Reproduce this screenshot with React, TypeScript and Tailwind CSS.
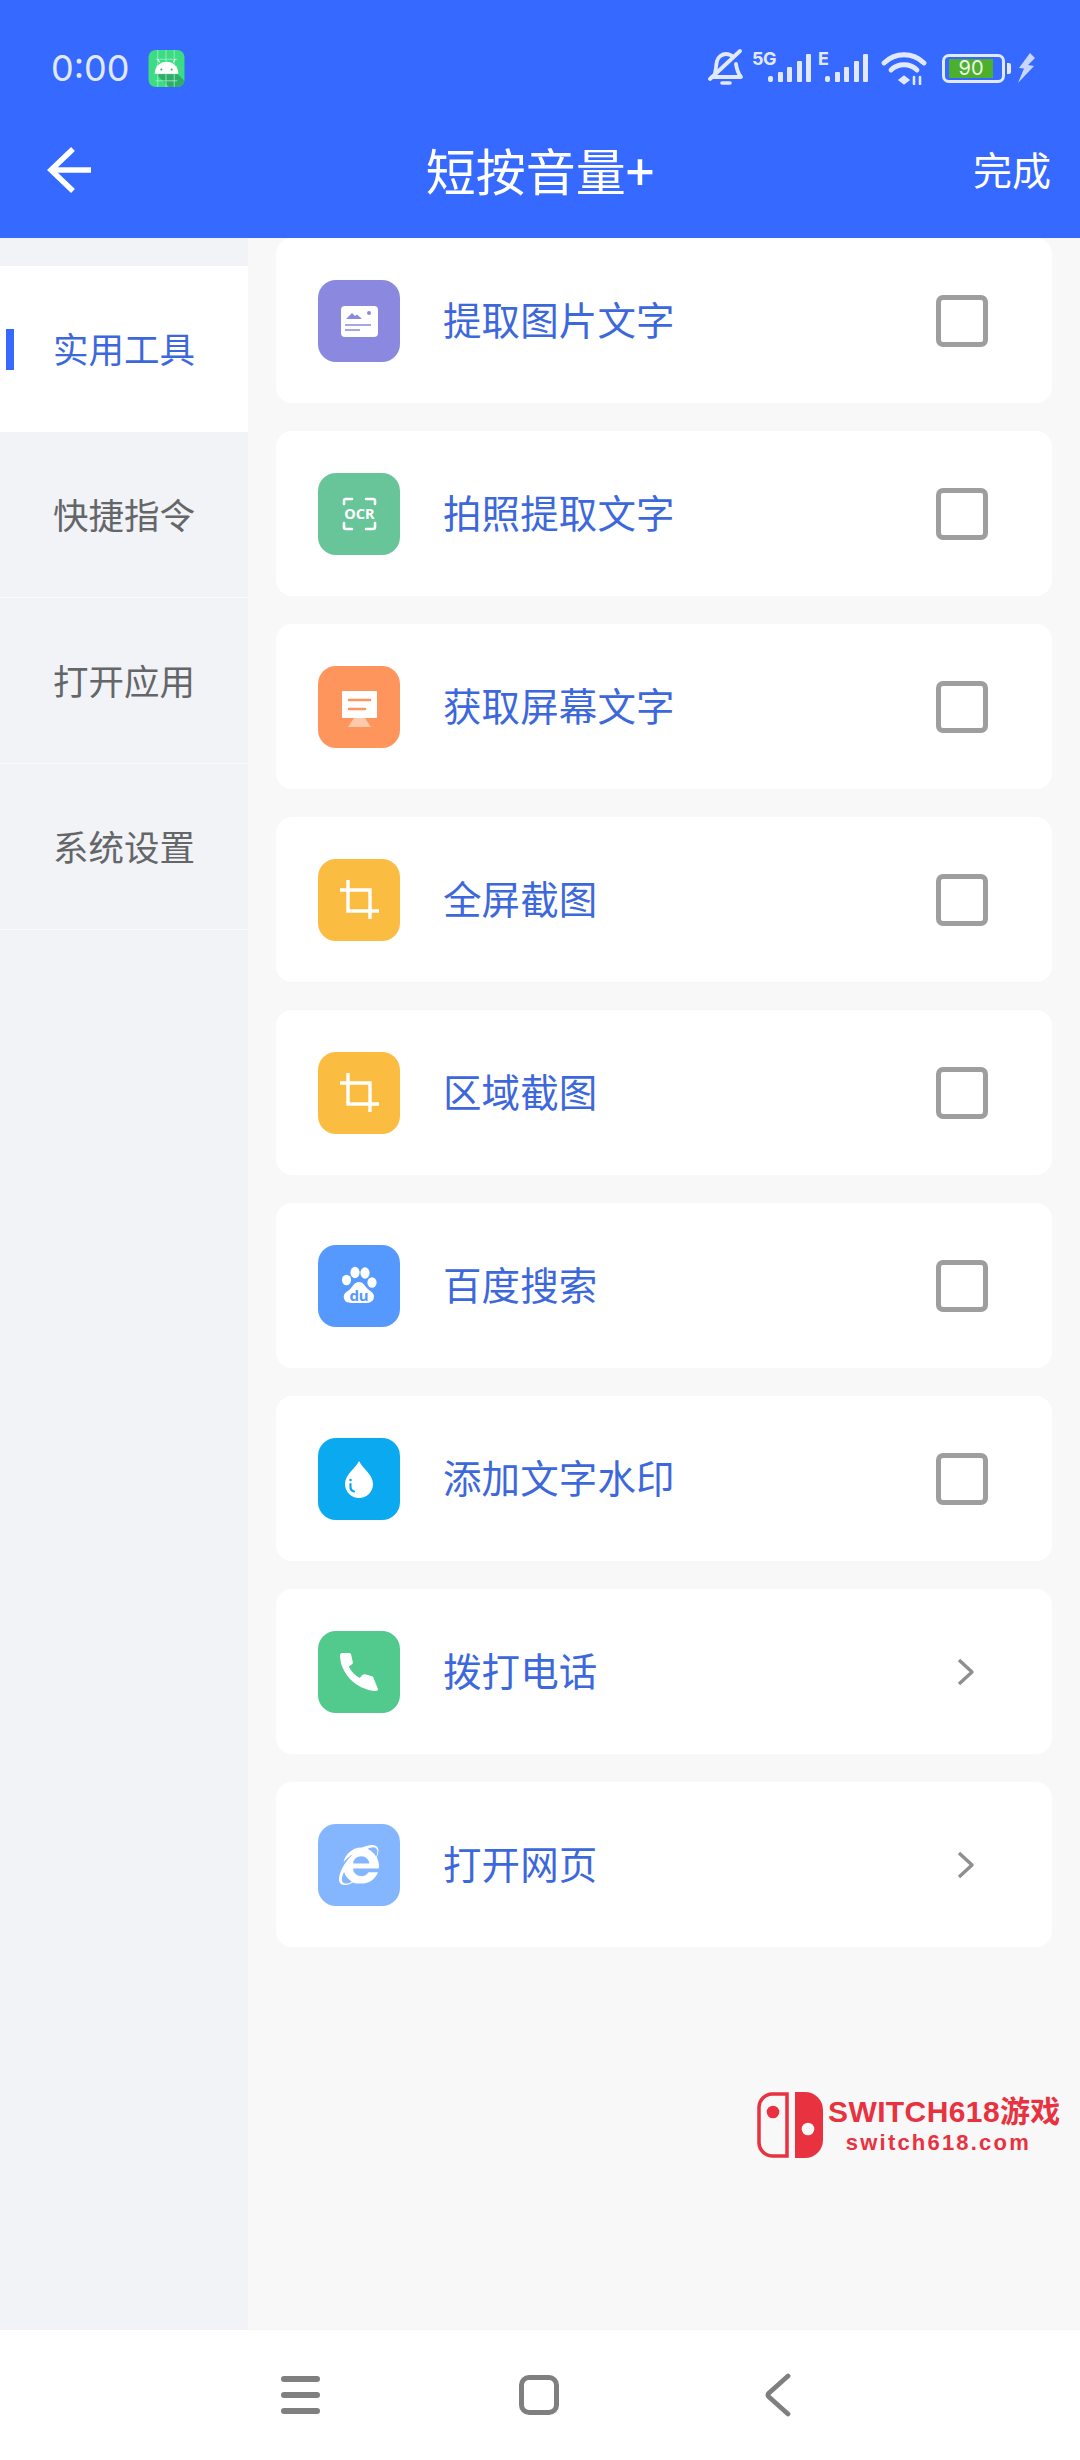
import { FaInternetExplorer } from "react-icons/fa";
import type { ReactNode } from "react";

const CJK = "font-['Noto_Sans_CJK_SC','Noto_Sans',sans-serif]";

function CropIcon() {
  return (
    <svg width="82" height="82" viewBox="0 0 82 82" fill="none" stroke="#fff" strokeWidth="3.4">
      <path d="M22 31H52V60" />
      <path d="M30 21V52H61" />
    </svg>
  );
}

function PictureIcon() {
  return (
    <svg width="82" height="82" viewBox="0 0 82 82">
      <rect x="23" y="26" width="37" height="31" rx="4" fill="#fff" />
      <path d="M28 39L34 33L37 36L39 34.500L44 39Z" fill="#8a89df" />
      <circle cx="51" cy="33" r="2" fill="#8a89df" />
      <path d="M27 45H53M27 50H42" stroke="#8a89df" strokeWidth="1.600" />
    </svg>
  );
}

function OcrIcon() {
  return (
    <svg width="82" height="82" viewBox="0 0 82 82" fill="none">
      <path
        d="M26 31V28a2 2 0 0 1 2-2h6M48 26h7a2 2 0 0 1 2 2v3M57 50v4a2 2 0 0 1-2 2h-7M34 56h-6a2 2 0 0 1-2-2v-4"
        stroke="#fff"
        strokeWidth="2.600"
        strokeLinecap="round"
      />
      <text x="41.500" y="46" textAnchor="middle" fill="#fff" fontSize="14.500" fontWeight="700" fontFamily="Noto Sans">
        OCR
      </text>
    </svg>
  );
}

function ScreenIcon() {
  return (
    <svg width="82" height="82" viewBox="0 0 82 82">
      <path d="M36 52H47L53 61H30Z" fill="#ffc9ad" />
      <rect x="24" y="25" width="35" height="27" rx="1" fill="#fff" />
      <path d="M31 34H52M31 43H47" stroke="#fe955c" strokeWidth="2.600" strokeLinecap="round" />
    </svg>
  );
}

function PawIcon() {
  return (
    <svg width="82" height="82" viewBox="0 0 82 82">
      <g fill="#fff">
        <ellipse cx="28.500" cy="35" rx="4.600" ry="5.200" />
        <ellipse cx="37" cy="27.500" rx="4.600" ry="5.800" />
        <ellipse cx="47" cy="28" rx="4.600" ry="5.800" />
        <ellipse cx="54" cy="37.500" rx="4.600" ry="5.200" />
        <path d="M41 37c5 0 6 5 10 8 4 2.500 6 5 4.500 9-1.500 3.500-5 4-8 4H34c-3 0-7-.5-8-4.500-1-4 1.500-6 4.500-8 4-2.500 5-8.500 10.500-8.500Z" />
      </g>
      <text x="41" y="56" textAnchor="middle" fill="#5599ff" fontSize="15" fontWeight="700" fontFamily="Noto Sans">
        du
      </text>
    </svg>
  );
}

function DropIcon() {
  return (
    <svg width="82" height="82" viewBox="0 0 82 82">
      <path d="M41 23C44 30 55 36 55 46A14 14 0 0 1 27 46C27 36 38 30 41 23Z" fill="#fff" />
      <circle cx="32.500" cy="42" r="1.300" fill="#0aa9f0" />
      <path d="M32.500 46v3.500c0 2 1.500 3.500 3.500 4" fill="none" stroke="#0aa9f0" strokeWidth="2.200" strokeLinecap="round" />
    </svg>
  );
}

function PhoneIcon() {
  return (
    <svg width="82" height="82" viewBox="0 0 82 82">
      <path
        fill="#fff"
        d="M24 22h7c1 0 2 .6 2.200 2l1.600 7c.2 1-.2 2-1 2.600l-3 2c2.500 5 6 9 11 11.500l2.500-3c.7-.8 1.700-1.100 2.700-.9l7 2c1 .3 1.700 1.300 1.700 2.300L60 58c0 1-.8 2-2 2C38 59 22 42 22 24c0-1 1-2 2-2Z"
      />
    </svg>
  );
}

type Item = { label: string; bg: string; icon: ReactNode; arrow?: boolean };

const items: Item[] = [
  { label: "提取图片文字", bg: "bg-[#8a89df]", icon: <PictureIcon /> },
  { label: "拍照提取文字", bg: "bg-[#68c599]", icon: <OcrIcon /> },
  { label: "获取屏幕文字", bg: "bg-[#fe955c]", icon: <ScreenIcon /> },
  { label: "全屏截图", bg: "bg-[#fbbc42]", icon: <CropIcon /> },
  { label: "区域截图", bg: "bg-[#fbbc42]", icon: <CropIcon /> },
  { label: "百度搜索", bg: "bg-[#5599ff]", icon: <PawIcon /> },
  { label: "添加文字水印", bg: "bg-[#0aa9f0]", icon: <DropIcon /> },
  { label: "拨打电话", bg: "bg-[#52c98d]", icon: <PhoneIcon />, arrow: true },
  {
    label: "打开网页",
    bg: "bg-[#84b5ff]",
    icon: <FaInternetExplorer className="size-[40px] text-white" />,
    arrow: true,
  },
];

const tabs = ["实用工具", "快捷指令", "打开应用", "系统设置"];

function Bars() {
  return (
    <div className="flex items-end gap-[4.500px] h-[28px]">
      <div className="w-[5px] h-[6px] bg-[#e2e9ff] rounded-[2px]" />
      <div className="w-[5px] h-[10px] bg-[#e2e9ff] rounded-[1px]" />
      <div className="w-[5px] h-[15px] bg-[#e2e9ff] rounded-[1px]" />
      <div className="w-[5px] h-[21px] bg-[#e2e9ff] rounded-[1px]" />
      <div className="w-[5px] h-[28px] bg-[#e2e9ff] rounded-[1px]" />
    </div>
  );
}

function StatusIcons() {
  return (
    <div className="flex items-center text-[#e2e9ff]">
      <svg width="36" height="38" viewBox="0 0 36 38" fill="none" stroke="#e2e9ff" strokeWidth="3.800" strokeLinecap="round" strokeLinejoin="round">
        <path d="M7 24c1-3 1-8 2-12 1-4 5-7 9-7 3 0 5 1 7 3M28 15c.5 4 1 8 5 13H4" />
        <path d="M2 30L32 2" />
        <path d="M14 34h8" strokeWidth="3.600" />
      </svg>
      <div className="ml-[8px] flex items-start">
        <span className="w-[16px] font-['Inter',sans-serif] text-[18px] leading-[18px] font-bold -mt-[4px] tracking-[-0.5px] whitespace-nowrap">5G</span>
        <Bars />
      </div>
      <div className="ml-[7px] flex items-start">
        <span className="w-[7px] font-['Inter',sans-serif] text-[18px] leading-[18px] font-bold -mt-[4px]">E</span>
        <Bars />
      </div>
      <svg className="ml-[13px]" width="46" height="34" viewBox="0 0 46 34" fill="none" stroke="#e2e9ff" strokeWidth="4.800" strokeLinecap="round">
        <path d="M3 12C14 1 32 1 43 12" />
        <path d="M10 19C17 12 29 12 36 19" />
        <path d="M18.500 29l4.500-3.500 4.500 3.500-4.500 3.500Z" fill="#e2e9ff" strokeWidth="2" />
        <path d="M33 26v7M39 26v7" strokeWidth="2.600" />
      </svg>
      <div className="ml-[15px] w-[63px] h-[29px] rounded-[7px] border-[3px] border-[#e2e9ff] flex items-center pl-[4px]">
        <div className="w-[44px] h-[19px] bg-[#4cb02e] flex items-center justify-center text-[20px] leading-none text-[#eef7e8] font-['Inter',sans-serif]">
          90
        </div>
      </div>
      <div className="ml-[2px] w-[4px] h-[11px] bg-[#e2e9ff] rounded-r-[2px]" />
      <svg className="ml-[7px]" width="17" height="30" viewBox="0 0 17 30" fill="#c9d6ff">
        <path d="M12 0L1 15l5 .5L0 30l16-17-6-1 7-7Z" />
      </svg>
    </div>
  );
}

function AndroidBadge() {
  return (
    <svg className="ml-[18px]" width="37" height="37" viewBox="0 0 35 36">
      <rect width="35" height="36" rx="7" fill="#3ddc84" />
      <path d="M7 23H28L35 30V29a7 7 0 0 1-7 7H20Z" fill="#2fae69" />
      <path d="M7 9H28M7 16H28M7 23H28M7 30H28M9 0V36M17 0V36M25 0V36" stroke="#a5eec6" strokeWidth="0.800" />
      <path d="M6 23a11.500 11.500 0 0 1 23 0Z" fill="#fff" />
      <path d="M11 12l-2-3M24 12l2-3" stroke="#fff" strokeWidth="1" />
      <circle cx="12.500" cy="19" r="1" fill="#2fae69" />
      <circle cx="22.500" cy="19" r="1" fill="#2fae69" />
    </svg>
  );
}

function Watermark() {
  return (
    <div className="absolute left-[757px] top-[2092px] flex items-center text-[#e8323f]">
      <svg width="66" height="66" viewBox="0 0 66 66">
        <path d="M30 2H15A13.500 13.500 0 0 0 2 15V51A13.500 13.500 0 0 0 15 64H30Z" fill="none" stroke="#e8323f" strokeWidth="3.500" />
        <circle cx="16" cy="20" r="6.300" fill="#e8323f" />
        <path d="M38 0H48A18 18 0 0 1 66 18V48A18 18 0 0 1 48 66H38Z" fill="#e8323f" />
        <circle cx="51" cy="37" r="6.300" fill="#f8f8f9" />
      </svg>
      <div className="ml-[5px] flex flex-col items-center font-['Liberation_Sans','Noto_Sans_CJK_SC',sans-serif] font-bold">
        <span className="text-[30px] leading-[36px] tracking-[0.4px] whitespace-nowrap">SWITCH618游戏</span>
        <span className="mr-[12px] text-[22px] leading-[26px] tracking-[2.200px] whitespace-nowrap">switch618.com</span>
      </div>
    </div>
  );
}

export default function App() {
  return (
    <div className={`relative w-[1080px] h-[2460px] flex flex-col bg-white overflow-hidden ${CJK}`}>
      {/* Header + status bar */}
      <header className="h-[238px] shrink-0 bg-[#3569ff] text-white">
        <div className="h-[136px] pl-[51px] pr-[45px] flex items-center justify-between">
          <div className="flex items-center">
            <span className="text-[36px] leading-none text-[#e2e9ff] font-['Inter',sans-serif]">0:00</span>
            <AndroidBadge />
          </div>
          <StatusIcons />
        </div>
        <div className="h-[68px] px-[47px] grid grid-cols-[1fr_auto_1fr] items-center">
          <svg width="44" height="46" viewBox="0 0 44 46" fill="none" stroke="#fff" strokeWidth="5.500">
            <path d="M44 23H4" />
            <path d="M26 2L4 23L26 44" />
          </svg>
          <div className="text-[50px] leading-none mb-[3px]">
            短按音量<span className="font-medium">+</span>
          </div>
          <div className="-mr-[18px] text-right text-[39px] leading-none mb-[4px]">完成</div>
        </div>
      </header>

      <main className="flex flex-1 min-h-0 bg-[#f8f8f9]">
        {/* Sidebar */}
        <aside className="w-[248px] shrink-0 bg-[#f1f3f7] pt-[28px]">
          {tabs.map((tab, i) =>
            i === 0 ? (
              <div key={tab} className="h-[166px] bg-white flex items-center">
                <div className="ml-[6px] w-[8px] h-[41px] bg-[#3569ff]" />
                <span className="ml-[39px] mb-[3px] text-[35.500px] text-[#3d68dc] leading-none">{tab}</span>
              </div>
            ) : (
              <div key={tab} className="h-[166px] border-b border-[#f9fafc] flex items-center pl-[53px]">
                <span className="mb-[1px] text-[35.500px] text-[#646668] leading-none">{tab}</span>
              </div>
            ),
          )}
        </aside>

        {/* Tool list */}
        <section className="flex-1 px-[28px] flex flex-col gap-[28px]">
          {items.map((item) => (
            <div key={item.label} className="h-[165px] shrink-0 bg-white rounded-[16px] flex items-center pl-[42px] pr-[64px]">
              <div className={`size-[82px] rounded-[18px] flex items-center justify-center ${item.bg}`}>{item.icon}</div>
              <span className="ml-[43px] mb-[4px] flex-1 text-[38.500px] tracking-[0.1px] leading-none text-[#3d68dc]">{item.label}</span>
              {item.arrow ? (
                <svg className="mr-[12px]" width="20" height="28" viewBox="0 0 20 28" fill="none" stroke="#8f8f8f" strokeWidth="3.400" strokeLinejoin="round">
                  <path d="M3 2L16 14L3 26" />
                </svg>
              ) : (
                <div className="size-[52px] rounded-[7px] border-[5.500px] border-[#9e9e9e]" />
              )}
            </div>
          ))}
        </section>
      </main>

      {/* Navigation bar */}
      <nav className="h-[130px] shrink-0 bg-white flex items-center pl-[281px]">
        <div className="w-[39px] flex flex-col gap-[10px]">
          <div className="h-[6px] rounded-full bg-[#7f7f7f]" />
          <div className="h-[6px] rounded-full bg-[#7f7f7f]" />
          <div className="h-[6px] rounded-full bg-[#7f7f7f]" />
        </div>
        <div className="ml-[199px] size-[40px] rounded-[10px] border-[5px] border-[#7f7f7f]" />
        <svg className="ml-[205px]" width="28" height="44" viewBox="0 0 28 44" fill="none" stroke="#7f7f7f" strokeWidth="4.800" strokeLinecap="round" strokeLinejoin="round">
          <path d="M24 3L5 20Q3 22 5 24L24 41" />
        </svg>
      </nav>

      <Watermark />
    </div>
  );
}
